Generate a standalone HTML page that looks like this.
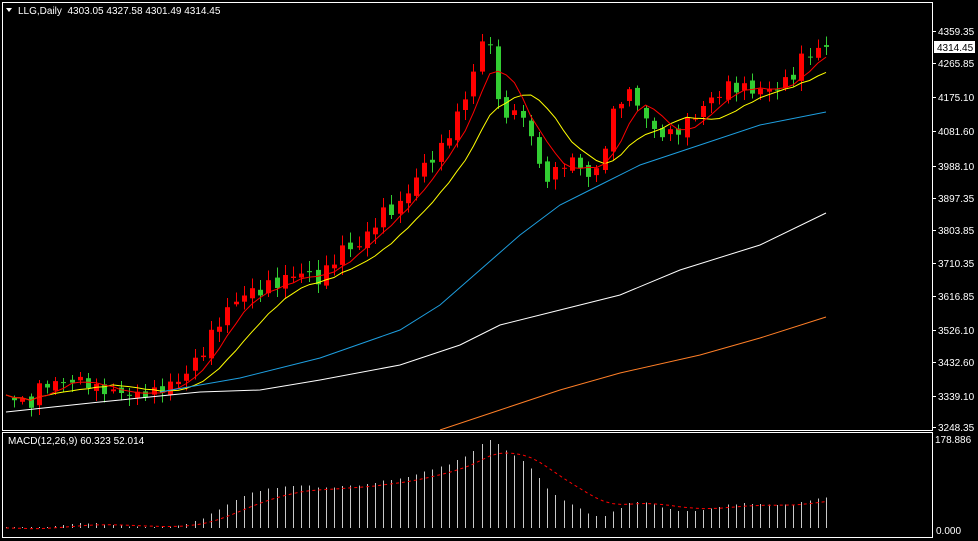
<!DOCTYPE html>
<html><head><meta charset="utf-8"><style>
body{margin:0;background:#000;width:978px;height:541px;overflow:hidden;font-family:"Liberation Sans",sans-serif}
svg{position:absolute;left:0;top:0}
</style></head><body>
<svg id="s" width="978" height="541" xmlns="http://www.w3.org/2000/svg"></svg>
<script>
(function(){
var s=document.getElementById('s'),h='';
function L(x1,y1,x2,y2,c,w,d){h+='<line x1="'+x1+'" y1="'+y1+'" x2="'+x2+'" y2="'+y2+'" stroke="'+c+'" stroke-width="'+(w||1)+'"'+(d?' stroke-dasharray="'+d+'"':'')+' shape-rendering="crispEdges"/>';}
function P(pts,c,d,clip){h+='<polyline fill="none" stroke="'+c+'" stroke-width="1" points="'+pts.map(function(p){return p[0].toFixed(1)+','+p[1].toFixed(1)}).join(' ')+'"'+(d?' stroke-dasharray="'+d+'"':'')+(clip?' clip-path="url(#cm)"':'')+'/>';}
function T(x,y,t,c,sz){h+='<text x="'+x+'" y="'+y+'" fill="'+(c||'#fff')+'" font-size="'+(sz||10)+'" font-family="Liberation Sans, sans-serif">'+t+'</text>';}
h+='<defs><clipPath id="cm"><rect x="3" y="3" width="929" height="427"/></clipPath></defs>';
h+='<rect x="2.5" y="2.5" width="930" height="428" fill="none" stroke="#fff"/>';
h+='<rect x="2.5" y="432.5" width="930" height="105" fill="none" stroke="#fff"/>';
var kp=[[6,395],[30,405],[40,385],[80,380],[100,390],[140,395],[160,390],[180,380],[200,355],[220,320],[240,295],[260,290],[300,272],[320,280],[340,250],[360,245],[380,215],[400,205],[420,170],[440,150],[460,110],[470,85],[480,45],[490,40],[498,105],[510,115],[525,115],[540,170],[550,180],[565,160],[580,165],[590,180],[600,165],[610,120],[625,90],[640,105],[650,130],[670,135],[690,120],[710,100],[730,85],[750,90],[770,90],[790,80],[800,60],[815,50],[826,48]];
function interp(x){for(var i=0;i<kp.length-1;i++){if(x<=kp[i+1][0]){var a=kp[i],b=kp[i+1];return a[1]+(b[1]-a[1])*(x-a[0])/(b[0]-a[0]);}}return kp[kp.length-1][1];}
var N=101,cl=[],xs=[];
for(var i=0;i<N;i++){var x=6+i*8.2;xs.push(x);cl.push(interp(x)+Math.sin(i*2.7)*6*(i<20?0.7:1));}
for(var i=1;i<N;i++){var o=cl[i-1]+Math.sin(i*1.3)*3,c=cl[i],x=Math.round(xs[i]);
var tp=Math.min(o,c),bt=Math.max(o,c);if(bt-tp<1)bt=tp+1;
var hi=tp-2-Math.abs(Math.sin(i*3.1))*8,lo=bt+2+Math.abs(Math.cos(i*2.3))*8;
var col=c>o?'#32cd32':'#ff0000';
L(x+0.5,hi,x+0.5,lo,col);
h+='<rect x="'+(x-2)+'" y="'+tp.toFixed(1)+'" width="5" height="'+(bt-tp).toFixed(1)+'" fill="'+col+'"/>';}
function ma(n){var r=[];for(var i=0;i<N;i++){var s0=0,k=0;for(var j=Math.max(0,i-n+1);j<=i;j++){s0+=cl[j];k++;}r.push([xs[i],s0/k]);}return r;}
P(ma(10),'#ffff00');P(ma(5),'#ff0000');
P([[160,392],[240,378],[320,358],[400,330],[440,305],[480,270],[520,235],[560,205],[600,185],[640,165],[700,145],[760,125],[826,112]],'#1e9fe0');
P([[6,412],[100,402],[200,392],[260,390],[320,380],[400,365],[460,345],[500,325],[560,310],[620,295],[680,270],[760,245],[826,213]],'#fff');
P([[440,430],[500,410],[560,390],[620,373],[700,355],[760,338],[826,317]],'#ff7f27',null,true);
var pr=cl.map(function(y){return 4359.35-(y-31)*2.806}),e12=pr[0],e26=pr[0],sg=0,m=[],sgs=[];
for(var i=0;i<N;i++){e12+=(pr[i]-e12)*2/13;e26+=(pr[i]-e26)*2/27;var v=e12-e26;m.push(v);sg+=(v-sg)*0.2;sgs.push(sg);}
var mx=Math.max.apply(null,m),sc=88/mx;
for(var i=0;i<N;i++){var v=m[i]*sc,x=Math.round(xs[i])+0.5;L(x,528,x,528-Math.max(v,1),'#c8c8c8');}
P(sgs.map(function(v,i){return[xs[i],528-v*sc]}),'#ff0000','3,3');
var lab=[[4359.35,31],[4265.85,63],[4175.10,97],[4081.60,131],[3988.10,166],[3897.35,198],[3803.85,230],[3710.35,263],[3616.85,296],[3526.10,330],[3432.60,362],[3339.10,396],[3248.35,427]];
lab.forEach(function(l){L(932,l[1]+0.5,936,l[1]+0.5,'#fff');T(938,l[1]+4,l[0].toFixed(2));});
h+='<rect x="934" y="41" width="41" height="12" fill="#fff"/>';T(937,51,'4314.45','#000');
T(935,443,'178.886');T(936,534,'0.000');
h+='<polygon points="6,8 12,8 9,12" fill="#fff"/>';
T(18,14,'LLG,Daily&#160; 4303.05 4327.58 4301.49 4314.45','#fff');
T(8,444,'MACD(12,26,9) 60.323 52.014','#fff');
s.innerHTML=h;
})();
</script>
</body></html>
